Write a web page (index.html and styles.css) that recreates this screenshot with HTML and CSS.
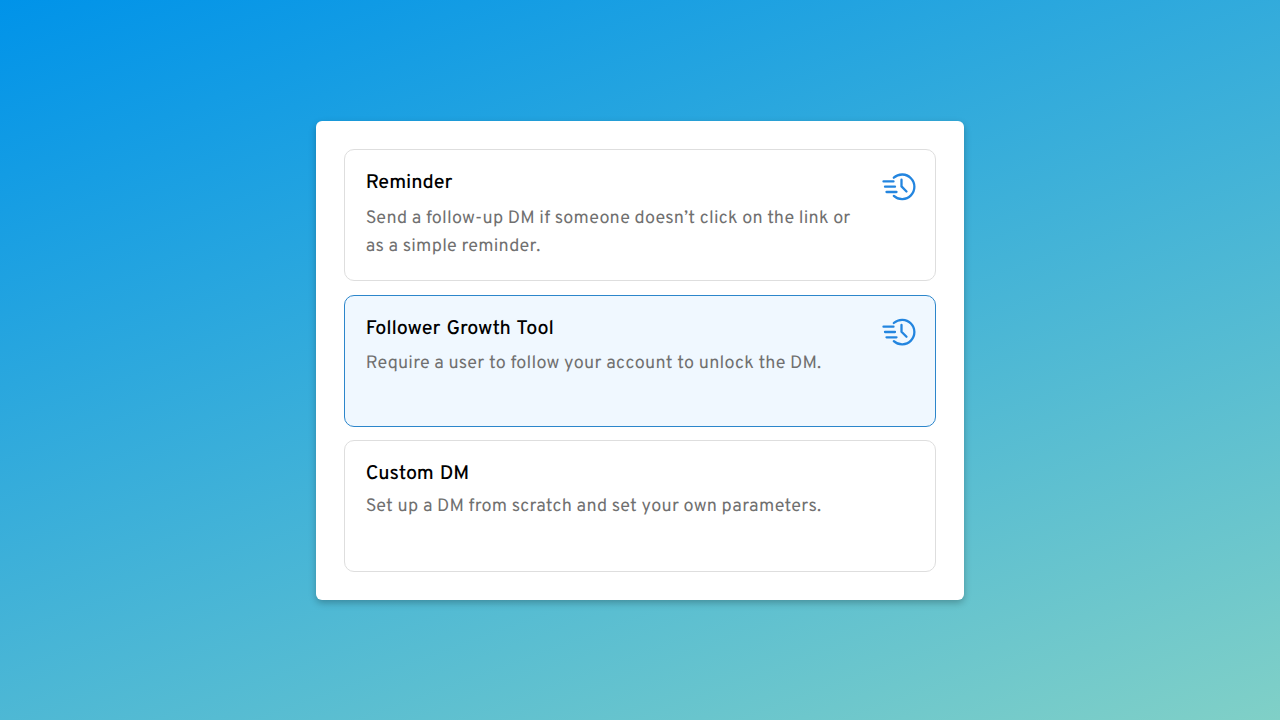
FILE: index.html
```html
<!DOCTYPE html>
<html lang="en">
<head>
    <meta charset="UTF-8">
    <meta name="viewport" content="width=device-width, initial-scale=1.0">
    <title>Follow-up options</title>
    <link rel="stylesheet" href="styles.css">
</head>
<body>
    <div class="panel">
        <div class="option">
            <div class="option-text">
                <h2>Reminder</h2>
                <p>Send a follow-up DM if someone doesn’t click on the link or<br>as a simple reminder.</p>
            </div>
            <svg class="icon" viewBox="0 0 34 30">
                <path d="M11.8 5.7A12.3 12.3 0 1 1 11.8 23.9M1.5 9.4h10M3 14.7h10M4.5 20h10M19.5 7.7v6.7l5 5.1"/>
            </svg>
        </div>

        <div class="option selected">
            <div class="option-text">
                <h2>Follower Growth Tool</h2>
                <p>Require a user to follow your account to unlock the DM.</p>
            </div>
            <svg class="icon" viewBox="0 0 34 30">
                <path d="M11.8 6A12.3 12.3 0 1 1 11.8 24.2M1.5 9.7h10M3 15h10M4.5 20.3h10M19.5 8v6.7l5 5.1"/>
            </svg>
        </div>

        <div class="option custom">
            <div class="option-text">
                <h2>Custom DM</h2>
                <p>Set up a DM from scratch and set your own parameters.</p>
            </div>
        </div>
    </div>
</body>
</html>
```
FILE: styles.css
```css
* {
    box-sizing: border-box;
}

body {
    margin: 0;
    height: 100vh;
    display: flex;
    align-items: center;
    justify-content: center;
    font-family: Overpass, Roboto, sans-serif;
    text-rendering: geometricPrecision;
    background-color: #0093E9;
    background-image: linear-gradient(160deg, #0093E9 0%, #80D0C7 100%);
}

.panel {
    width: 648px;
    height: 479.5px;
    margin-top: 1px;
    padding: 28.5px 27.6px 28px 28.4px;
    display: flex;
    flex-direction: column;
    gap: 13.5px;
    background-color: white;
    border-radius: 6px;
    box-shadow: 0 3px 7px rgba(0, 0, 0, 0.25);
}

.option {
    flex: 1;
    display: flex;
    justify-content: space-between;
    padding: 20px 19.6px 0 20.3px;
    border: 1px solid #dedede;
    border-radius: 10px;
}

.selected {
    background-color: #f0f8ff;
    border-color: #2c86cb;
}

h2 {
    margin: 0;
    font-size: 19.8px;
    font-weight: 500;
    line-height: 28px;
    letter-spacing: -0.1px;
    word-spacing: 1.5px;
    color: black;
}

p {
    margin: 6.5px 0 0;
    font-size: 18px;
    line-height: 28px;
    letter-spacing: 0.22px;
    white-space: nowrap;
    color: #707070;
}

.custom p {
    margin-top: 4px;
}

.icon {
    width: 34px;
    height: 30px;
    margin-top: 1.3px;
    fill: none;
    stroke: #2385df;
    stroke-width: 2.3;
    stroke-linecap: round;
    stroke-linejoin: round;
}
```
